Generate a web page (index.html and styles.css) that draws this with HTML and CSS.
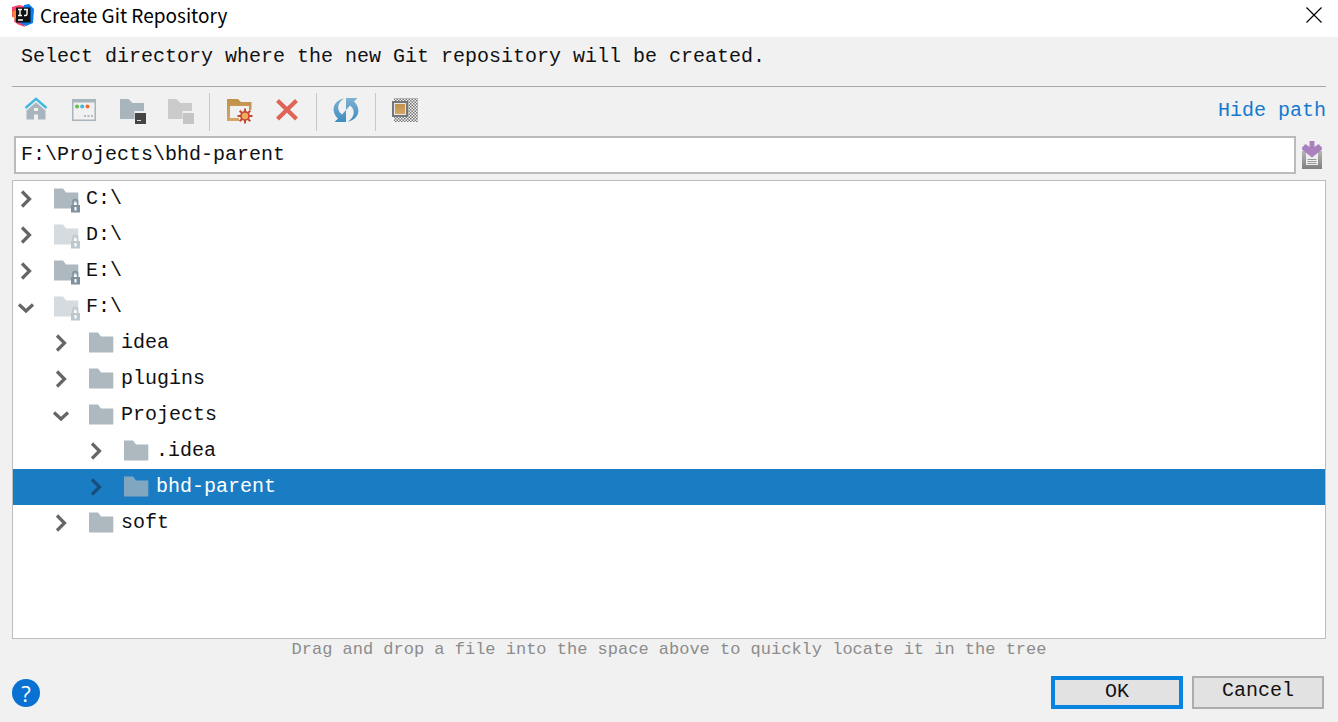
FILE: index.html
```html
<!DOCTYPE html>
<html lang="en">
<head>
<meta charset="utf-8">
<meta name="viewport" content="width=device-width, initial-scale=1">
<title>Create Git Repository</title>
<link rel="stylesheet" href="styles.css">
</head>
<body>
<svg class="defs" aria-hidden="true">
  <defs>
    <linearGradient id="blue" x1="0" y1="0" x2="0" y2="1"><stop offset="0" stop-color="#7fb2d2"/><stop offset="1" stop-color="#3d8cbe"/></linearGradient>
    <linearGradient id="tan" x1="0" y1="0" x2="0" y2="1"><stop offset="0" stop-color="#c0914a"/><stop offset="1" stop-color="#d6a765"/></linearGradient>
    <linearGradient id="gray" x1="0" y1="0" x2="0" y2="1"><stop offset="0" stop-color="#b5b5b5"/><stop offset="1" stop-color="#808080"/></linearGradient>
    <pattern id="dots" width="3" height="3" patternUnits="userSpaceOnUse"><path d="M0 0h1.500v1.500H0zM1.500 1.500H3V3H1.500z" fill="#777"/></pattern>
    <symbol id="right" viewBox="0 0 24 24"><path d="M8 4.500l7.500 7.500l-7.500 7.500" fill="none" stroke="currentColor" stroke-width="3.200"/></symbol>
    <symbol id="down" viewBox="0 0 24 24"><path d="M5 9.500l7 6.500l7-6.500" fill="none" stroke="currentColor" stroke-width="3.200"/></symbol>
    <symbol id="folder" viewBox="0 0 28 28"><path d="M1 3.500h9l3 4h12.300v16H1z" fill="#adb8bf"/></symbol>
    <symbol id="drive" viewBox="0 0 28 28"><path d="M1 3.500h9l3 4h12.300v10h-5v6H1z" fill="#adb8bf"/><path d="M20 20v-3.200q0-2.300 2.300-2.300t2.300 2.300V20" fill="none" stroke="#7f919e" stroke-width="1.600"/><path d="M18 20h9v7.500h-9zM21.500 22v3.500h2V22z" fill="#7f919e" fill-rule="evenodd"/></symbol>
  </defs>
</svg>
<main class="dialog">
  <header class="titlebar">
    <svg class="app-icon" viewBox="0 0 24 24" aria-hidden="true">
      <path d="M1 4l7-2 8 2-4 18-9-3 2-6-4 1z" fill="#fb3e6b"/>
      <path d="M1 9l6-3 2 8-6 2z" fill="#fb8b31"/>
      <path d="M3 16l9 1 2 7-8-3z" fill="#f13a6b"/>
      <path d="M13 2l5-1 5 5-1 14-7 3-6-3z" fill="#087cf5"/>
      <path d="M5 4.500h14.500v15H5z" fill="#111"/>
      <path d="M7 6.500h4M9 6.500v6M7 12.500h4M13 6.500h4M16 6.500v4.500q0 1.500-1.500 1.500H13M7 17h5" fill="none" stroke="#fff" stroke-width="1.400"/>
    </svg>
    <h1 class="title">Create Git Repository</h1>
    <button class="close" type="button" aria-label="Close"><svg viewBox="0 0 16 16"><path d="M.5.500l15 15M15.500.500l-15 15" stroke="#000" stroke-width="1.200"/></svg></button>
  </header>
  <p class="message">Select directory where the new Git repository will be created.</p>
  <div class="toolbar">
    <div class="tools">
      <button type="button" aria-label="Home"><svg viewBox="0 0 32 32"><path d="M6.500 16l9.500-8 9.500 8v9.500H18v-5h-4v5H6.500zM14 14v3h4v-3z" fill="#a9b5bc" fill-rule="evenodd"/><path d="M5.500 14L16 4.800 26.500 14" fill="none" stroke="#f1f1f1" stroke-width="5"/><path d="M5.500 14L16 4.800 26.500 14" fill="none" stroke="#42b8e2" stroke-width="2.400"/></svg></button>
      <button type="button" aria-label="Desktop"><svg viewBox="0 0 32 32"><path d="M4 5h24v22H4zM5.500 8.500v17h21v-17z" fill="#a9b5bc" fill-rule="evenodd"/><circle cx="9" cy="12.500" r="2" fill="#68bd45"/><circle cx="14.200" cy="12.500" r="2" fill="#42b3e0"/><circle cx="19.500" cy="12.500" r="2" fill="#f26b31"/><path d="M16 21h2v2h-2zM19.500 21h2v2h-2zM23 21h2v2h-2z" fill="#b2bbc0"/></svg></button>
      <button type="button" aria-label="Project directory"><svg viewBox="0 0 32 32"><path d="M4 5h8.500l4 4H28v8h-9.500v8H4z" fill="#a9b5bc"/><path d="M19 19h11v11H19z" fill="#454545"/><path d="M21 26.500h4" stroke="#ddd"/></svg></button>
      <button type="button" aria-label="Module directory" disabled><svg viewBox="0 0 32 32"><path d="M4 5h8.500l4 4H28v8h-9.500v8H4z" fill="#cbcbcb"/><path d="M19 19h11v11H19z" fill="#c5c5c5"/></svg></button>
      <span class="separator"></span>
      <button type="button" aria-label="New folder"><svg viewBox="0 0 32 32"><path d="M4 5h11l3 3h10.500v8H26v-4H7v12h9v3H4z" fill="url(#tan)"/><path d="M22 14.500v15M14.500 22h15M16.700 16.700l10.600 10.600M27.300 16.700L16.700 27.300" stroke="#c64a35" stroke-width="2"/><circle cx="22" cy="22" r="4.900" fill="#c64a35"/><circle cx="22" cy="22" r="3.200" fill="#f3ae5a"/></svg></button>
      <button type="button" aria-label="Delete"><svg viewBox="0 0 32 32"><path d="M6.500 6.500l19 18.500M25.500 6.500L6.500 25" stroke="#e06456" stroke-width="4.200"/></svg></button>
      <span class="separator"></span>
      <button type="button" aria-label="Refresh"><svg viewBox="0 0 32 32"><path d="M14 4.500C2 7 1 18 8 24.500L4.500 28H16V16l-4 4.500C6 16 7.500 8.500 14 4.500z" fill="url(#blue)"/><path d="M18 27.500C30 25 31 14 24 7.500L27.500 4H16v12l4-4.500c6 4.500 4.500 12-2 16z" fill="url(#blue)"/></svg></button>
      <span class="separator"></span>
      <button type="button" aria-label="Show hidden files"><svg viewBox="0 0 32 32"><path d="M5 4h24v24H5z" fill="url(#dots)"/><path d="M3 7h16v16H3z" fill="#747679"/><path d="M5 9h12v12H5z" fill="#e5e5e5"/><path d="M6 10h10v10H6z" fill="url(#tan)"/></svg></button>
    </div>
    <a class="path-link" href="#path">Hide path</a>
  </div>
  <div class="path-row">
    <input id="path" class="path" type="text" aria-label="Path" value="F:\Projects\bhd-parent" spellcheck="false">
    <button class="history" type="button" aria-label="Recent paths"><svg viewBox="0 0 24 32"><path d="M2 12h20v18H2z" fill="url(#gray)"/><path d="M6 12h12v14H6z" fill="#ededed"/><path d="M7.500 20.500h9M7.500 22.500h9M7.500 24.500h9" stroke="#999"/><path d="M9.500 2h5v6l4-3 3.500 3.500v2L12 18.500 2 10.500v-2L5.500 5l4 3z" fill="#a982bd"/></svg></button>
  </div>
  <ul class="tree" role="tree" aria-label="Directories">
    <li class="row" role="treeitem"><button class="toggle" type="button" aria-label="Expand"><svg><use href="#right"/></svg></button><svg class="icon"><use href="#drive"/></svg><span>C:\</span></li>
    <li class="row" role="treeitem"><button class="toggle" type="button" aria-label="Expand"><svg><use href="#right"/></svg></button><svg class="icon faded"><use href="#drive"/></svg><span>D:\</span></li>
    <li class="row" role="treeitem"><button class="toggle" type="button" aria-label="Expand"><svg><use href="#right"/></svg></button><svg class="icon"><use href="#drive"/></svg><span>E:\</span></li>
    <li class="row" role="treeitem"><button class="toggle" type="button" aria-label="Collapse"><svg><use href="#down"/></svg></button><svg class="icon faded"><use href="#drive"/></svg><span>F:\</span></li>
    <li class="row level-2" role="treeitem"><button class="toggle" type="button" aria-label="Expand"><svg><use href="#right"/></svg></button><svg class="icon"><use href="#folder"/></svg><span>idea</span></li>
    <li class="row level-2" role="treeitem"><button class="toggle" type="button" aria-label="Expand"><svg><use href="#right"/></svg></button><svg class="icon"><use href="#folder"/></svg><span>plugins</span></li>
    <li class="row level-2" role="treeitem"><button class="toggle" type="button" aria-label="Collapse"><svg><use href="#down"/></svg></button><svg class="icon"><use href="#folder"/></svg><span>Projects</span></li>
    <li class="row level-3" role="treeitem"><button class="toggle" type="button" aria-label="Expand"><svg><use href="#right"/></svg></button><svg class="icon"><use href="#folder"/></svg><span>.idea</span></li>
    <li class="row level-3 selected" role="treeitem" aria-selected="true"><button class="toggle" type="button" aria-label="Expand"><svg><use href="#right"/></svg></button><svg class="icon"><use href="#folder"/></svg><span>bhd-parent</span></li>
    <li class="row level-2" role="treeitem"><button class="toggle" type="button" aria-label="Expand"><svg><use href="#right"/></svg></button><svg class="icon"><use href="#folder"/></svg><span>soft</span></li>
  </ul>
  <p class="hint">Drag and drop a file into the space above to quickly locate it in the tree</p>
  <footer class="footer">
    <button class="help" type="button" aria-label="Help">?</button>
    <button class="action primary" type="button">OK</button>
    <button class="action" type="button">Cancel</button>
  </footer>
</main>
</body>
</html>
```
FILE: styles.css
```css
* { box-sizing: border-box; }
body {
  margin: 0;
  background: #f1f1f1;
  color: #111;
  font: 20px/24px "Liberation Mono", "Courier New", monospace;
}
button {
  padding: 0;
  border: 0;
  background: none;
  color: inherit;
  font: inherit;
}
svg { display: block; }
.defs { position: absolute; width: 0; height: 0; }
.dialog { display: flex; flex-direction: column; min-height: 100vh; }

.titlebar {
  display: flex;
  align-items: center;
  gap: 5px;
  height: 37px;
  padding: 0 16px 8px 11px;
  background: #fff;
}
.app-icon { width: 24px; height: 24px; }
.title {
  flex: 1;
  margin: 0;
  font: 400 19px/28px "Noto Sans CJK SC", "Open Sans", sans-serif;
  color: #000;
}
.close svg { width: 16px; height: 16px; }

.message {
  margin: 0 12px;
  padding: 8px 9px 17px;
  border-bottom: 1px solid #a9a9a9;
}

.toolbar {
  display: flex;
  align-items: center;
  justify-content: space-between;
  height: 49px;
  padding: 0 12px 0 20px;
}
.tools { display: flex; align-items: center; }
.tools button { padding-bottom: 4px; }
.tools button + button { margin-left: 16px; }
.tools svg { width: 32px; height: 32px; }
.separator { width: 1px; height: 38px; margin: 0 13px; background: #c8c8c8; }
.path-link { padding-bottom: 2px; color: #1479ce; text-decoration: none; }

.path-row { display: flex; align-items: center; gap: 4px; padding: 0 14px; }
.path {
  flex: 1;
  min-width: 0;
  height: 38px;
  padding: 0 5px 2px;
  border: 2px solid #bbb;
  border-radius: 0;
  outline: 0;
  background: #fff;
  color: #111;
  font: inherit;
}
.history svg { width: 24px; height: 32px; }

.tree {
  flex: 1;
  margin: 6px 12px 0;
  padding: 0;
  border: 1px solid #bdbdbd;
  background: #fff;
  list-style: none;
}
.row { display: flex; align-items: center; height: 36px; padding-left: 1px; }
.level-2 { padding-left: 36px; }
.level-3 { padding-left: 71px; }
.toggle { margin-right: 15px; color: #666; }
.toggle svg { width: 24px; height: 24px; }
.icon { width: 28px; height: 28px; margin-right: 5px; }
.faded { opacity: 0.5; }
.selected { background: #1a7dc4; color: #fff; }
.selected .toggle { color: #174f7c; }
.selected .icon { opacity: 0.7; }

.hint {
  margin: 0;
  color: #8c8c8c;
  font-size: 17px;
  line-height: 22px;
  text-align: center;
}
.footer { display: flex; align-items: center; gap: 9px; padding: 15px 14px 13px 12px; }
.help {
  width: 28px;
  height: 28px;
  margin-right: auto;
  border-radius: 50%;
  background: #0971d1;
  color: #fff;
  font: 22px/28px "Open Sans", sans-serif;
}
.action {
  width: 132px;
  height: 33px;
  padding-bottom: 4px;
  border: 2px solid #adadad;
  background: #e2e2e2;
}
.primary { border: 4px solid #0883df; }
```
